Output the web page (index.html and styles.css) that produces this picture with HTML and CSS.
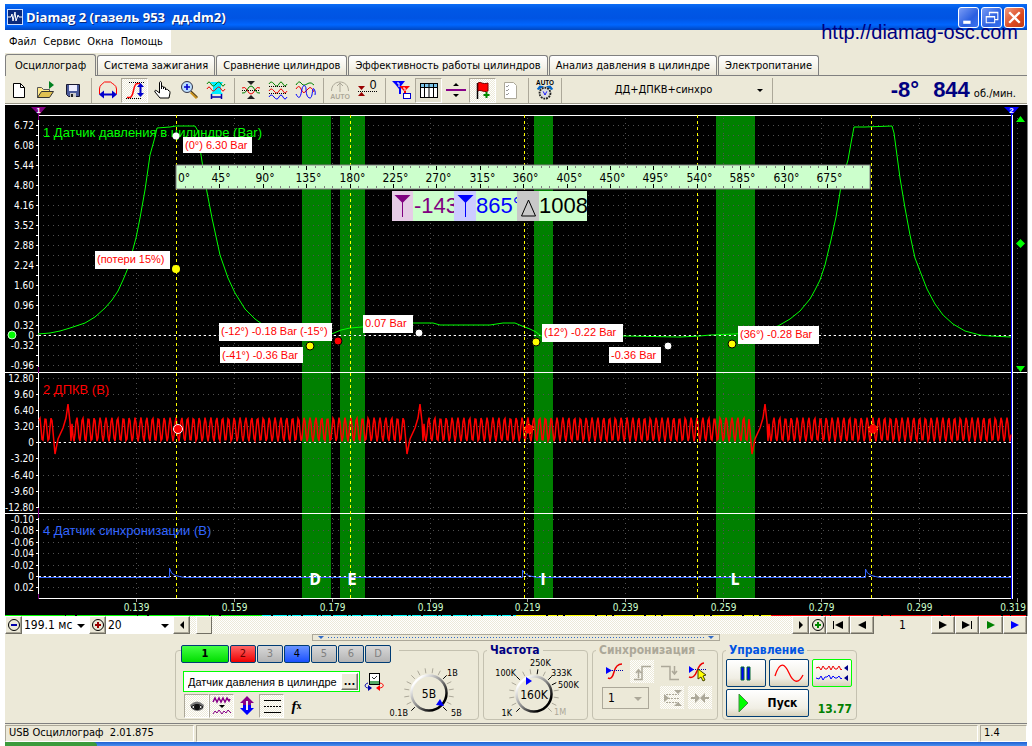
FILE: index.html
```html
<!DOCTYPE html>
<html lang="ru">
<head>
<meta charset="utf-8">
<title>Diamag 2</title>
<link rel="stylesheet" href="styles.css">
</head>
<body>
<div class="window">
  <header class="titlebar">
    <svg class="app-icon" viewBox="0 0 16 16"><rect width="16" height="16" fill="#cfe0ff"/><rect x="1" y="1" width="14" height="14" fill="#0a2a7c"/><path d="M1 8h3l1-3 1 7 2-9 1 9 2-6 1 2h3" fill="none" stroke="#fff"/></svg>
    <h1 class="title">Diamag 2 (газель 953&nbsp; дд.dm2)</h1>
    <button class="win-btn" aria-label="Свернуть"><svg viewBox="0 0 18 18"><rect x="4" y="12" width="7" height="3" fill="#fff"/></svg></button>
    <button class="win-btn" aria-label="Восстановить"><svg viewBox="0 0 18 18"><path d="M7 7V4h8v7h-3M7 4.500h8M4 8h8v6H4zM4 8.500h8" fill="none" stroke="#fff"/></svg></button>
    <button class="win-btn win-close" aria-label="Закрыть"><svg viewBox="0 0 18 18"><path d="M4 4l10 10M14 4L4 14" stroke="#fff" stroke-width="2.200"/></svg></button>
  </header>
  <a class="site" href="#">http://diamag-osc.com</a>
  <nav class="menu"><a href="#">Файл</a><a href="#">Сервис</a><a href="#">Окна</a><a href="#">Помощь</a></nav>
  <div class="tabs" role="tablist">
    <button class="tab active" role="tab" aria-selected="true">Осциллограф</button>
    <button class="tab" role="tab">Система зажигания</button>
    <button class="tab" role="tab">Сравнение цилиндров</button>
    <button class="tab" role="tab">Эффективность работы цилиндров</button>
    <button class="tab" role="tab">Анализ давления в цилиндре</button>
    <button class="tab" role="tab">Электропитание</button>
  </div>
  <div class="toolbar">
    <button class="tool" aria-label="Новый"><svg viewBox="0 0 20 20"><path d="M4.500 3.500h7l4 4v10h-11z" fill="#fff" stroke="#000"/><path d="M11.500 3.500v4h4" fill="none" stroke="#000"/></svg></button>
    <button class="tool" aria-label="Открыть"><svg viewBox="0 0 20 20"><path d="M1.500 17.500v-10h4l2 2h6v3" fill="#ffe98a" stroke="#555"/><path d="M1.500 17.500l4-6h12l-4 6z" fill="#e0c050" stroke="#333"/><path d="M13 1l5 4-5 4z" fill="#008020"/></svg></button>
    <button class="tool" aria-label="Сохранить"><svg viewBox="0 0 20 20"><path d="M3.500 4.500h13v12h-11l-2-2z" fill="#4a5a9a" stroke="#181830"/><rect x="6" y="5" width="8" height="6" fill="#eef"/><rect x="7" y="13" width="6" height="4" fill="#ccc"/><rect x="8" y="14" width="2" height="3" fill="#222"/></svg></button>
    <i class="sep"></i>
    <button class="tool" aria-label="Период"><svg viewBox="0 0 20 20"><path d="M1.500 14V9c0-4 3-5 5-7h6c2 2 6 3 6 7v5" fill="none" stroke="#f00"/><path d="M1 14.500l5-4v3h8v-3l5 4-5 4v-3H6v3z" fill="#00c"/></svg></button>
    <button class="tool pressed" aria-label="Амплитуда"><svg viewBox="0 0 20 20"><path d="M2 17.500h3c4 0 3-14 7-14h3" fill="none" stroke="#f00" stroke-width="1.500"/><path d="M4 2.500h15M1 18.500h15" stroke="#000" stroke-dasharray="1 1"/><path d="M15.500 3l3.500 4h-2.500v6H19l-3.500 4-3.500-4h2.500V7H12z" fill="#00c"/></svg></button>
    <button class="tool" aria-label="Рука"><svg viewBox="0 0 20 20"><path d="M7.500 13V3c0-2 2-2 2 0v6-2c0-1 2-1 2 0v2-1c0-1 2-1 2 0v2c0-1 2.500-1 2.500 0l1 1c1 0 1 1 1 2l-1 5H8l-5-6c-1-2 1-2 2-1z" fill="#fff" stroke="#000"/></svg></button>
    <button class="tool" aria-label="Лупа"><svg viewBox="0 0 20 20"><path d="M12 12l6 6" stroke="#c8901c" stroke-width="3"/><path d="M12 11l6.500 6" stroke="#333"/><circle cx="8" cy="7" r="5.500" fill="#bdf" stroke="#334"/><path d="M8 4v6M5 7h6" stroke="#00c" stroke-width="1.600"/></svg></button>
    <button class="tool" aria-label="Выделение"><svg viewBox="0 0 20 20"><path d="M4 2h13l-2 3v7l2 2H5l2-3V5z" fill="#0ef"/><path d="M1 4q2-4 4 0t5 0 5 0 4 0" fill="none" stroke="#008000"/><path d="M1 9q2-4 4 0t5 0 5 0 4 0" fill="none" stroke="#e00"/><path d="M5.500 14v5M15.500 14v5M6 17h9" stroke="#00a" stroke-width="1.500"/></svg></button>
    <i class="sep"></i>
    <button class="tool" aria-label="Совместить"><svg viewBox="0 0 20 20"><path d="M1 8q3-2 5 2t4 4 4-4 5-2" fill="none" stroke="#e00"/><path d="M1 13q3 1 5-3t4-4 4 4 5 3" fill="none" stroke="#008000"/><path d="M6 1h8l-4 4zM6 19h8l-4-4z" fill="#222"/><path d="M1 10.500h18" stroke="#000" stroke-dasharray="1 1"/></svg></button>
    <button class="tool" aria-label="Разделить"><svg viewBox="0 0 20 20"><path d="M1 4q2-4 5 0t5 0 4 0 4 0" fill="none" stroke="#008000"/><path d="M1 11q2-4 5 0t5 0 4 0 4 0" fill="none" stroke="#e00"/><path d="M1 17q2-4 5 0t5 0 4 0 4 0" fill="none" stroke="#00f"/><path d="M1 6.500h18M1 13.500h18" stroke="#000" stroke-dasharray="1 1"/></svg></button>
    <button class="tool" aria-label="Наложить"><svg viewBox="0 0 20 20"><path d="M1 5q3-5 5-2t4 2 4-2 5 2" fill="none" stroke="#008000"/><path d="M1 9q3-5 5 0t4 3 4-4 5 4" fill="none" stroke="#e00"/><path d="M1 14c4 8 5 0 6-5s4-4 4 0 1 9 4 9 2-12 4-9 1 5 1 6" fill="none" stroke="#00f"/></svg></button>
    <i class="sep"></i>
    <button class="tool" aria-label="Авто" disabled><svg viewBox="0 0 20 20"><path d="M1.500 11c0-12 17-12 17 0M10 3v9M7 6l3-3 3 3" fill="none" stroke="#aca899"/><text x="10" y="19" class="ic-auto muted">AUTO</text></svg></button>
    <button class="tool" aria-label="Обнулить"><svg viewBox="0 0 20 20"><path d="M1 6h7l-3.500 4zM1 16h7l-3.500-4z" fill="#900"/><path d="M1 11.500h19" stroke="#000" stroke-dasharray="1 1"/><text x="16" y="9" class="ic-zero">0</text></svg></button>
    <i class="sep"></i>
    <button class="tool" aria-label="Маркеры"><svg viewBox="0 0 20 20"><path d="M0 1h13l-4 5v8H7V9L3 4z" fill="#00f"/><path d="M7 6h11l-4 4v6h-2v-5z" fill="#f00"/><path d="M5 3h2v4M11 8h2v3" fill="none" stroke="#fff"/><rect x="11.500" y="13.500" width="7" height="5" fill="#fff" stroke="#00c"/></svg></button>
    <button class="tool pressed flat" aria-label="Таблица"><svg viewBox="0 0 20 20"><rect x="1.500" y="3.500" width="17" height="14" fill="#fff" stroke="#000"/><rect x="2" y="4" width="16" height="3" fill="#7ac4e8"/><path d="M1 7.500h18M5.500 4v14M10 4v14M14.500 4v14" stroke="#000"/></svg></button>
    <button class="tool" aria-label="Разделитель"><svg viewBox="0 0 20 20"><rect x="0" y="9" width="20" height="2" fill="#808"/><path d="M7 6h6l-3-3zM7 14h6l-3 3z" fill="#000"/></svg></button>
    <button class="tool pressed" aria-label="Флаг"><svg viewBox="0 0 20 20"><path d="M4.500 3v16" stroke="#000" stroke-width="1.500"/><path d="M5 3c3-2 4 2 10 0v8c-5 2-7-2-10 0z" fill="#f00" stroke="#700"/><path d="M13.500 12v6M10.500 15h6" stroke="#080" stroke-width="2"/></svg></button>
    <button class="tool" aria-label="Отчет"><svg viewBox="0 0 20 20"><path d="M4.500 2.500h9l3 3v13h-12z" fill="#fff" stroke="#aca899"/><path d="M6 6l1 1 2-2M6 10l1 1 2-2M6 14l1 1 2-2" fill="none" stroke="#999"/></svg></button>
    <i class="sep"></i>
    <button class="tool" aria-label="Автоматический режим"><svg viewBox="0 0 20 22"><text x="10" y="6" class="ic-auto">AUTO</text><path d="M1 10l3-4 5 1-6 4zM19 10l-3-4-5 1 6 4z" fill="#06c"/><circle cx="10" cy="14.500" r="6" fill="#ddd" stroke="#222" stroke-dasharray="2 1" stroke-width="2"/><path d="M8 12.500l2 4 2-4" fill="none" stroke="#00f"/></svg></button>
    <i class="sep narrow"></i>
    <label class="combo preset"><select aria-label="Настройка"><option>ДД+ДПКВ+синхро</option></select></label>
    <i class="sep narrow"></i>
    <div class="readings"><strong class="big">-8°</strong><strong class="big">844</strong><span>об./мин.</span></div>
  </div>

  <main class="scope"><svg id="plot" class="plot" viewBox="5 105 1022 511"></svg></main>

  <div class="transport">
    <button class="raised w17" aria-label="Уменьшить"><svg viewBox="0 0 14 14"><circle cx="7" cy="7" r="5.500" fill="none" stroke="#000"/><path d="M4 7h6" stroke="#00a" stroke-width="2"/></svg></button>
    <label class="combo w68"><select aria-label="Развертка"><option>199.1 мс</option></select></label>
    <button class="raised w17" aria-label="Увеличить"><svg viewBox="0 0 14 14"><circle cx="7" cy="7" r="5.500" fill="none" stroke="#000"/><path d="M4 7h6M7 4v6" stroke="#900" stroke-width="2"/></svg></button>
    <label class="combo w68"><select aria-label="Кадры"><option>20</option></select></label>
    <button class="raised w17" aria-label="Влево"><svg viewBox="0 0 14 14"><path d="M9 3v8L5 7z"/></svg></button>
    <div class="track"><div class="thumb"></div></div>
    <button class="raised w17" aria-label="Вправо"><svg viewBox="0 0 14 14"><path d="M5 3v8l4-4z"/></svg></button>
    <button class="raised w17" aria-label="Добавить"><svg viewBox="0 0 14 14"><circle cx="7" cy="7" r="5.500" fill="none" stroke="#000"/><path d="M4 7h6M7 4v6" stroke="#080" stroke-width="2"/></svg></button>
    <button class="raised w24" aria-label="Первый"><svg viewBox="0 0 14 14"><path d="M2 3h1v8H2zM12 3v8L4 7z"/></svg></button>
    <button class="raised w24" aria-label="Предыдущий"><svg viewBox="0 0 14 14"><path d="M11 3v8L3 7z"/></svg></button>
    <output class="frame">1</output>
    <button class="raised w24" aria-label="Следующий"><svg viewBox="0 0 14 14"><path d="M3 3v8l8-4z"/></svg></button>
    <button class="raised w24" aria-label="Последний"><svg viewBox="0 0 14 14"><path d="M11 3h1v8h-1zM2 3v8l8-4z"/></svg></button>
    <button class="raised w24" aria-label="Воспроизвести"><svg viewBox="0 0 14 14"><path d="M3 3v8l8-4z" fill="#008000"/></svg></button>
    <button class="raised w24" aria-label="Воспроизвести все"><svg viewBox="0 0 14 14"><path d="M3 3v8l8-4z" fill="#00f"/></svg></button>
  </div>
  <div class="splitter"><i class="down"></i><i class="dots"></i><i class="down"></i></div>

  <div class="panels">
    <section class="group channels">
      <div class="channel-left">
        <div class="channel-row">
          <button class="ch ch1">1</button><button class="ch ch2">2</button><button class="ch">3</button><button class="ch ch4">4</button><button class="ch">5</button><button class="ch">6</button><button class="ch">D</button>
        </div>
        <div class="name-row">
          <div class="name-box"><input aria-label="Название канала" value="Датчик давления в цилиндре"><button class="raised dots-btn" aria-label="Выбрать">...</button></div>
          <button class="tool" aria-label="Калибровка"><svg viewBox="0 0 20 20"><rect x="5.500" y="1.500" width="10" height="11" fill="#fff" stroke="#000"/><rect x="6" y="9" width="9" height="3" fill="#5a6"/><path d="M8 5l2 2 3-3" fill="none" stroke="#333"/><path d="M4 11c-4 1-4 5 1 5" fill="none" stroke="#00a"/><path d="M16 11c5 1 4 5-1 5" fill="none" stroke="#f00"/><path d="M4 13l4 3-4 3z" fill="#00a"/><path d="M16 13l-4 3 4 3z" fill="#f00"/></svg></button>
        </div>
        <div class="icon-row">
          <button class="tool pressed" aria-label="Видимость"><svg viewBox="0 0 20 20"><path d="M3 9q7-7 14 0l-1 4q-6 4-11 0z" fill="#777"/><path d="M4 11q6-5 12 0-6 5-12 0z" fill="#ddd" stroke="#111"/><circle cx="10" cy="11" r="3" fill="#111"/></svg></button>
          <button class="tool pressed" aria-label="Фильтр"><svg viewBox="0 0 20 20"><path d="M1 6l2-4 2 4 2-4 2 4 2-4 2 4 2-4 2 3 1-2" fill="none" stroke="#808" stroke-width="1.500"/><path d="M7 9h6l-3 3z"/><path d="M1 18l2-3 2 2 2-3 3 4 2-3 2 2 2-3 3 3" fill="none" stroke="#808"/></svg></button>
          <button class="tool" aria-label="Инвертировать"><svg viewBox="0 0 20 20"><path d="M10 0l7 7h-3v3H6V7H3z" fill="#808"/><path d="M10 19l7-7h-3v-3H6v3H3z" fill="#00f"/><rect x="9" y="5" width="2" height="9" fill="#eee"/></svg></button>
          <button class="tool pressed" aria-label="Линии"><svg viewBox="0 0 20 20"><path d="M2 4.500h17M2 16.500h17" stroke="#000"/><path d="M2 10.500h17" stroke="#000" stroke-dasharray="2 1"/></svg></button>
          <button class="tool fx" aria-label="Функция"><i>f</i><b>x</b></button>
        </div>
      </div>
      <svg class="knob knob-v" viewBox="386 655 90 64" id="knobV"></svg>
    </section>
    <fieldset class="group freq"><legend>Частота</legend><svg class="knob knob-f" viewBox="486 657 100 62" id="knobF"></svg></fieldset>
    <fieldset class="group sync"><legend>Синхронизация</legend>
      <div class="sync-row">
        <button class="tool" aria-label="Порог"><svg viewBox="0 0 20 20"><path d="M4 16q4 2 6-6t8-8" fill="none" stroke="#e00" stroke-width="1.500"/><path d="M6 8.500h13" stroke="#00a" stroke-dasharray="1 1"/><path d="M2 5v7l6-3.500z" fill="#00f"/></svg></button>
        <button class="tool pale" aria-label="Фронт" disabled><svg viewBox="0 0 20 20"><path d="M2 17.500h8v-13h9M6.500 16V8M4 11l2.500-3L9 11" fill="none" stroke="#aca899" stroke-width="1.500"/></svg></button>
        <button class="tool" aria-label="Спад" disabled><svg viewBox="0 0 20 20"><path d="M1 4.500h9v13h9M14.500 4v8M12 9l2.500 3L17 9" fill="none" stroke="#aca899" stroke-width="1.500"/></svg></button>
        <button class="tool" aria-label="Указать"><svg viewBox="0 0 20 20"><path d="M1 15q5 2 8-6t7-8" fill="none" stroke="#e00" stroke-width="1.500"/><path d="M3 7.500h16" stroke="#00a" stroke-dasharray="1 1"/><path d="M1 4v7l5-3.500z" fill="#00f"/><path d="M10 7v10l3-2 2 4 2-1-2-4 3-1z" fill="#ff0" stroke="#440"/></svg></button>
      </div>
      <div class="sync-row">
        <label class="combo sync-combo"><select aria-label="Канал синхронизации" disabled><option>1</option></select></label>
        <button class="tool pale" aria-label="Уровень" disabled><svg viewBox="0 0 20 20"><path d="M2 6v8l5-4zM12 2h8l-4 4zM12 18h8l-4-4z" fill="#aca899"/><path d="M4 6.500h13M6 10.500h11M4 14.500h13" stroke="#aca899" stroke-dasharray="2 1"/></svg></button>
        <button class="tool pale" aria-label="Сжать" disabled><svg viewBox="0 0 20 20"><path d="M1 9h4V5l5 5-5 5v-4H1zM19 9h-4V5l-5 5 5 5v-4h4z" fill="#aca899"/></svg></button>
      </div>
    </fieldset>
    <fieldset class="group control"><legend>Управление</legend>
      <div class="control-grid">
        <button class="xp" aria-label="Пауза"><svg viewBox="0 0 34 22"><path d="M12 5h3v13h-3zM18 5h3v13h-3z" fill="#00f" stroke="#063"/></svg></button>
        <button class="xp" aria-label="Один кадр"><svg viewBox="0 0 34 22"><path d="M3 14C8-2 13 2 17 11s9 12 14 2" fill="none" stroke="#f00" stroke-width="1.300"/></svg></button>
        <button class="xp selected" aria-label="Поток"><svg viewBox="0 0 34 22"><path d="M1 6l3-1 2 3 2-4 2 3h2l2-3 2 4 2-4 2 3h2l2-3 2 4 1-1" fill="none" stroke="#e00"/><path d="M1 16l3 1 2-3 2 4 2-3h2l2-2 2 4 2-3 2 2h2l2-2 2 3 1-1" fill="none" stroke="#00f"/><path d="M33 3v6l-4-3zM33 13v6l-4-3z" fill="#008"/></svg></button>
        <button class="xp start"><svg viewBox="0 0 12 20"><path d="M1 1v18l9-9z" fill="#0f0" stroke="#484"/></svg>Пуск</button>
        <output class="volt">13.77</output>
      </div>
    </fieldset>
  </div>

  <footer class="status"><span class="cell device">USB Осциллограф&nbsp; 2.01.875</span><span class="cell fill"></span><span class="cell version">1.4</span></footer>
  <div class="taskbar"><i class="start-edge"></i></div>
</div>
<script src="plot.js"></script>
</body>
</html>
```
FILE: styles.css
```css
* { box-sizing: border-box; }
body { margin: 0; background: #fff; color: #000; font: 11px/14px "DejaVu Sans Condensed", "Noto Sans", sans-serif; }
button, input, select { font: inherit; color: inherit; margin: 0; padding: 0; border-radius: 0; }
svg { display: block; }

.window { position: relative; margin: 4px 5px 0 5px; background: #ece9d8; display: flex; flex-direction: column; }

.titlebar { height: 26px; display: flex; align-items: center; gap: 2px; padding: 0 2px; background: linear-gradient(#0a6cf5, #0058e6 20%, #0054e3 55%, #0066ff 80%, #0047c0); }
.app-icon { width: 16px; height: 16px; margin: 0 1px 0 0; }
.title { flex: 1; margin: 0; color: #fff; font: bold 13px/16px "Open Sans", sans-serif; text-shadow: 1px 1px #0a2a7c; }
.win-btn { width: 21px; height: 21px; border: 1px solid #fff; border-radius: 3px; background: linear-gradient(135deg, #7a9cf5, #2a5fe0 60%, #3a74f0); }
.win-close { background: linear-gradient(135deg, #f09a80, #dd4a20 60%, #c03c14); }
.site { position: absolute; right: 9px; top: 16px; color: #000080; text-decoration: none; font: 20px/24px "Liberation Sans", sans-serif; }

.menu { align-self: flex-start; height: 23px; margin-bottom: 1px; display: flex; align-items: center; gap: 7px; padding: 0 8px 0 4px; background: #fff; }
.menu a { color: #000; text-decoration: none; }

.tabs { display: flex; align-items: flex-end; gap: 1px; height: 22px; border-bottom: 1px solid #808080; }
.tab { height: 20px; padding: 0 6px; border: 1px solid #808080; border-bottom: 0; border-radius: 3px 3px 0 0; background: linear-gradient(#fff, #f4f2e8 60%, #e8e4d4); }
.tab.active { height: 22px; padding: 0 9px; margin-bottom: -1px; background: #ece9d8; }

.toolbar { height: 29px; display: flex; align-items: center; border-bottom: 1px solid #fff; box-shadow: inset 0 -1px #9a9788; }
.tool { width: 27px; height: 25px; flex: none; display: flex; align-items: center; justify-content: center; border: 1px solid transparent; background: none; }
.tool svg { width: 20px; height: 20px; overflow: visible; }
.pressed, .pale { background: repeating-conic-gradient(#fff 0 25%, #ece9d8 0 50%) 0 0 / 2px 2px; }
.pressed { border-color: #aca899 #fff #fff #aca899; }
.flat { background: #e4e1d0; }
.sep { flex: none; width: 8px; height: 25px; background: linear-gradient(#aca899, #aca899) 5px 0 / 1px 100% no-repeat; }
.narrow { width: 6px; background-position: 3px 0; }
.ic-auto { font: bold 7px "Liberation Sans", sans-serif; text-anchor: middle; }
.muted { fill: #aca899; }
.ic-zero { font: 12px "Liberation Sans", sans-serif; text-anchor: middle; }
.combo { position: relative; display: block; }
.combo select { appearance: none; width: 100%; height: 100%; border: 0; background: transparent; padding-left: 2px; outline: 0; }
.combo::after { content: ""; position: absolute; right: 6px; top: 50%; margin-top: -1px; border: 4px solid transparent; border-top-color: #000; border-bottom: 0; pointer-events: none; }
.preset { width: 205px; height: 22px; }
.preset select { text-align-last: center; padding-right: 8px; }
.preset::after { border-width: 3px; border-bottom: 0; }
.readings { flex: 1; display: flex; justify-content: flex-end; align-items: baseline; gap: 4px; padding-right: 11px; white-space: nowrap; }
.big { color: #000080; font: bold 22px/26px "Liberation Sans", sans-serif; }
.big + .big { margin-left: 10px; }

.scope { background: #000; border-right: 1px solid #808080; margin-right: -1px; }
.plot { width: 100%; height: auto; }
.plot text { fill: #fff; font: 10px "DejaVu Sans Condensed", "Noto Sans", sans-serif; }
.plot .axis { text-anchor: end; }
.plot .time { text-anchor: middle; fill: #cfc; }
.plot .name { font: 13px "Liberation Sans", sans-serif; }
.plot .note { font: 11px "Liberation Sans", sans-serif; }
.plot .scale { fill: #000; font-size: 12px; }
.plot .value { font: 22px "Liberation Sans", sans-serif; }
.plot .stroke-mark { font: bold 15px "DejaVu Sans Condensed", sans-serif; text-anchor: middle; }
.plot .cursor { font: bold 8px "Liberation Sans", sans-serif; text-anchor: middle; }
.plot .green { fill: #0f0; }
.plot .red, .plot .note { fill: #f00; }
.plot .blue { fill: #36f; }
.plot .pure-blue { fill: #00f; }
.plot .purple { fill: #800080; }
.plot .black { fill: #000; }

.transport { display: flex; height: 18px; }
.raised { flex: none; display: flex; align-items: center; justify-content: center; border: 1px solid; border-color: #fff #716f64 #716f64 #fff; background: #ece9d8; box-shadow: inset -1px -1px #aca899; }
.raised svg { width: 14px; height: 14px; }
.w17 { width: 17px; }
.w24 { width: 24px; }
.w68 { width: 67px; background: #fff; font-size: 12px; }
.w68::after { right: 4px; }
.track { flex: 1; padding-left: 6px; background: repeating-conic-gradient(#fff 0 25%, #ece9d8 0 50%) 0 0 / 2px 2px; }
.thumb { width: 16px; height: 18px; border: 1px solid; border-color: #fff #716f64 #716f64 #fff; background: #ece9d8; }
.frame { width: 57px; text-align: center; line-height: 18px; font-size: 12px; }
.splitter { width: 408px; height: 7px; margin-left: 307px; display: flex; align-items: center; gap: 4px; padding: 0 5px; border: 1px solid #aca899; }
.dots { flex: 1; height: 1px; background: repeating-linear-gradient(90deg, #316ac5 0 1px, transparent 1px 3px); }
.down { border: 3px solid transparent; border-top-color: #316ac5; border-bottom: 0; }

.panels { display: flex; gap: 4px; height: 83px; padding: 3px 0 3px 170px; border-bottom: 1px solid #808080; }
.group { margin: 0; padding: 0; border: 1px solid #c4c1b0; border-radius: 4px; min-width: 0; }
.group legend { padding: 0 3px; margin-left: 3px; font: bold 12px/13px "DejaVu Sans Condensed", sans-serif; }
.channels { width: 304px; margin-top: 6px; display: flex; }
.channel-left { margin-left: 5px; width: 204px; }
.channel-row { display: flex; gap: 1px; width: 218px; margin-top: -6px; background: #ece9d8; }
.ch { width: 26px; height: 18px; border: 1px solid #003c74; border-radius: 2px; color: #808080; background: linear-gradient(#d8d8d8, #b4b4b4); }
.ch1 { width: 48px; color: #000; font-weight: bold; background: linear-gradient(#4f4, #0d0); }
.ch2 { color: #600; background: linear-gradient(#f66, #e00); }
.ch4 { color: #000; background: linear-gradient(#6a94ff, #1a50ff); }
.name-row { display: flex; align-items: center; margin-top: 6px; padding-left: 2px; }
.name-box { flex: none; width: 177px; height: 21px; display: flex; align-items: center; border: 1px solid #0f0; background: #fff; padding: 1px; }
.name-box input { flex: 1; min-width: 0; border: 0; outline: 0; background: transparent; padding-left: 3px; font-family: "Liberation Sans", sans-serif; }
.dots-btn { width: 17px; height: 17px; line-height: 8px; font-weight: bold; }
.icon-row { display: flex; gap: 0; margin-top: 0; padding-left: 3px; }
.icon-row .tool { width: 25px; height: 24px; }
.fx { font: bold 15px/18px "Liberation Serif", serif; }
.fx b { font-size: 10px; }
.knob { flex: none; overflow: visible; }
.knob-v { width: 90px; height: 64px; margin: 4px 0 0 1px; }
.knob-f { width: 100px; height: 62px; margin-left: 2px; }
.knob text { font: 9px "DejaVu Sans Condensed", sans-serif; }
.knob .main { font-size: 12px; text-anchor: middle; }
.knob .end { text-anchor: end; }
.knob .off { fill: #aca899; }
.freq { width: 105px; color: #000080; }
.sync { width: 126px; color: #aca899; }
.control { width: 135px; color: #0054e3; }
.sync-row { display: flex; align-items: center; gap: 4px; padding: 3px 0 0 9px; }
.sync-row .tool { width: 24px; height: 23px; }
.sync-combo { width: 47px; height: 22px; border: 1px solid #aca899; margin-right: 7px; font-size: 12px; }
.sync-combo select { color: #000; opacity: 1; padding-left: 5px; }
.sync-combo::after { border-top-color: #aca899; }
.control-grid { display: grid; grid-template-columns: 40px 40px 40px; grid-template-rows: 28px 28px; gap: 2px 3px; padding: 2px 0 0 3px; }
.xp { display: flex; align-items: center; justify-content: center; border: 1px solid #003c74; border-radius: 2px; background: linear-gradient(#fff, #f0eee4 70%, #d8d2bc); }
.xp svg { width: 34px; height: 22px; }
.xp.selected { border-color: #0f0; }
.xp.start { grid-column: span 2; gap: 18px; color: #000; font: bold 12px/16px "DejaVu Sans Condensed", sans-serif; }
.xp.start svg { width: 12px; height: 20px; }
.volt { align-self: end; text-align: right; color: #008000; font: bold 12px/16px "DejaVu Sans Condensed", sans-serif; }

.status { display: flex; gap: 2px; height: 18px; padding-top: 1px; }
.cell { border: 1px solid; border-color: #aca899 #fff #fff #aca899; padding-left: 3px; }
.device { width: 189px; }
.fill { flex: 1; }
.version { width: 47px; }
.taskbar { height: 4px; background: linear-gradient(#1f5fd0, #4a90f0); }
.start-edge { display: block; width: 92px; height: 4px; border-radius: 0 4px 0 0; background: #3c9a3c; }
```
FILE: plot.js
```js
const NS = "http://www.w3.org/2000/svg";

function add(parent, tag, attrs, text) {
  const node = document.createElementNS(NS, tag);
  for (const key in attrs) node.setAttribute(key, attrs[key]);
  if (text !== undefined) node.textContent = text;
  parent.appendChild(node);
  return node;
}

const plot = document.getElementById("plot");
const line = (x1, y1, x2, y2, stroke, extra) =>
  add(plot, "path", Object.assign({ d: `M${x1} ${y1}L${x2} ${y2}`, stroke, fill: "none", "shape-rendering": "crispEdges" }, extra));
const rect = (x, y, width, height, fill) => add(plot, "rect", { x, y, width, height, fill });
const label = (x, y, cls, text) => add(plot, "text", { x, y, class: cls }, text);
const dot = (cx, cy, r, fill, stroke) => add(plot, "circle", { cx, cy, r, fill, stroke: stroke || "none" });

rect(5, 105, 1022, 511, "#000");

// valve phases
[[302, 29], [340, 25], [534, 19], [716, 39]].forEach(([x, w]) => rect(x, 116, w, 482, "#008000"));

// channel scales
const scales = [];
for (let i = 0; i <= 24; i++) {
  const shown = i % 2 === 0 && i !== 22 || i === 21;
  scales.push([125 + i * 10, i === 21 ? "0" : shown ? (6.72 - i * 0.32).toFixed(2) : i === 22 ? "-0.32" : ""]);
}
[[378, "12.80"], [394, "9.60"], [410, "6.40"], [426, "3.20"], [442, "0"], [458, "-3.20"], [475, "-6.40"], [491, "-9.60"], [507, "-12.80"],
 [519, "-0.10"], [530, "-0.08"], [542, "-0.06"], [553, "-0.04"], [565, "-0.02"], [576, "0"], [587, "0.02"]].forEach(s => scales.push(s));
scales.forEach(([y, text]) => {
  line(43, y + 0.5, 1011, y + 0.5, "#505050", { "stroke-dasharray": "1 4" });
  line(36, y + 0.5, 39, y + 0.5, "#fff");
  label(34, y + 4, "axis", text);
});

// time scale
for (let i = 0; i < 10; i++) {
  const x = Math.round(136 + i * 97.85) + 0.5;
  line(x, 118, x, 598, "#505050", { "stroke-dasharray": "1 4" });
  line(x, 598, x, 602, "#999");
  label(Math.min(x, 1013), 611, "time", (0.139 + i * 0.02).toFixed(3));
}

label(43, 137, "name green", "1 Датчик давления в цилиндре (Bar)");
label(43, 394, "name red", "2 ДПКВ (В)");
label(43, 535, "name blue", "4 Датчик синхронизации (В)");

// frame
line(38, 115.5, 1012, 115.5, "#fff");
line(5, 372.5, 1027, 372.5, "#fff");
line(5, 513.5, 1027, 513.5, "#fff");
line(38, 598.5, 1012, 598.5, "#fff");
line(38.5, 115, 38.5, 599, "#fff");
line(1012.5, 115, 1012.5, 599, "#fff");
line(1011.5, 112, 1011.5, 599, "#00f");
[[112, 120], [367, 373], [508, 518], [594, 599]].forEach(([a, b]) => line(38.5, a, 38.5, b, "#800080"));
[335.5, 442.5, 576.5].forEach(y => line(39, y, 1011, y, "#fff", { "stroke-dasharray": "2 3" }));

// cylinder pressure
const pressure = [[38,334],[50,333],[60,331],[70,328],[85,323],[95,317],[105,308],[112,300],[118,291],[123,280],[128,268],[133,249],[136,238],[140,218],[145,190],[150,155],[155,137],[157,128],[170,127],[176,126],[195,126],[198,131],[201,155],[206,187],[212,218],[220,255],[228,278],[235,293],[245,309],[255,319],[262,324],[290,331],[325,336],[334,333],[341,330],[350,328],[362,327],[400,323],[433,323],[440,325],[490,325],[503,323],[515,323],[522,326],[530,329],[536,332],[541,336],[623,336],[680,337],[700,336],[710,335],[735,334],[760,331],[778,326],[790,319],[800,311],[810,299],[815,290],[820,280],[825,265],[831,240],[836,217],[842,180],[848,160],[851,143],[854,127],[865,127],[892,126],[894,133],[900,178],[905,208],[910,235],[915,258],[920,271],[927,289],[935,304],[943,315],[953,324],[965,331],[980,335],[990,336],[1011,337]];
add(plot, "path", { d: "M" + pressure.map(p => p.join(" ")).join("L"), fill: "none", stroke: "#0f0" });

// crankshaft sensor: 58 teeth and a gap of two per turn
const gaps = [55, 407, 752];
const wave = [];
for (let x = 39; x <= 1011; x += 1) {
  const gap = gaps.find(g => x > g - 3 && x < g + 17);
  if (gap !== undefined) {
    if (x === gap - 2) wave.push([gap, 454], [gap + 3, 439], [gap + 8, 428], [gap + 11, 418], [gap + 13, 404], [gap + 15, 422], [gap + 16, 441]);
    continue;
  }
  const from = [71 - 352, 71, 423, 768].filter(s => s <= x).pop();
  wave.push([x, (429.5 + 12 * Math.cos((x - from) / 5.83 * 2 * Math.PI + Math.PI)).toFixed(1)]);
}
add(plot, "path", { d: "M" + wave.map(p => p.join(" ")).join("L"), fill: "none", stroke: "#f00", "stroke-width": 1.5 });

// synchronisation
const pulses = [[169.5, 568], [522.5, 570], [865.5, 569]].map(([x, y]) => `H${x}V${y}L${x + 2} 573L${x + 6} 575.500L${x + 14} 577.500`);
add(plot, "path", { d: "M39 577.500" + pulses.join("") + "H1011", fill: "none", stroke: "#36f" });

[176.5, 350.5, 524.5, 697.5, 871.5].forEach(x => line(x, 115, x, 598, "#ff0", { "stroke-dasharray": "3 3" }));
[["D", 315], ["E", 352], ["I", 543], ["L", 735]].forEach(([t, x]) => label(x, 585, "stroke-mark", t));

// degree ruler
add(plot, "rect", { x: 176, y: 165, width: 694, height: 24, fill: "#cfc", stroke: "#808080" });
for (let i = 0; i < 80; i++) {
  const x = Math.round(176 + i * 8.68) + 0.5;
  const major = i % 5 === 0;
  if (i) {
    line(x, 166, x, major ? 170 : 168, major ? "#000" : "#808080");
    line(x, 188, x, major ? 184 : 186, major ? "#000" : "#808080");
  }
  if (major) label(i === 0 ? 178 : x - (i < 15 ? 8 : 11), 182, "scale", i * 9 + "°");
}

// cursor read-outs
[[392, 21, "#e6cce6"], [413, 41, "#cfc"], [454, 22, "#ccf"], [476, 41, "#cfc"], [517, 22, "#c8c8c8"], [539, 48, "#cfc"]].forEach(([x, w, c]) => rect(x, 191, w, 30, c));
[[414, 40, "-143", "purple"], [476, 41, "865°", "pure-blue"], [539, 48, "1008", "black"]].forEach(([x, w, t, c]) => {
  const box = add(plot, "svg", { x, y: 191, width: w, height: 30 });
  add(box, "text", { x: 0, y: 22, class: "value " + c }, t);
});
[[402.5, "#800080"], [465.5, "#00f"]].forEach(([x, c]) => {
  add(plot, "path", { d: `M${x - 8} 195h16l-8 8z`, fill: c });
  line(x, 200, x, 217, c);
});
add(plot, "path", { d: "M528.500 200l-7 16h14z", fill: "none", stroke: "#000" });

// measurements
[[183, 137, 69, 16, "(0°) 6.30 Bar"], [95, 251, 75, 18, "(потери 15%)"], [219, 323, 113, 18, "(-12°) -0.18 Bar (-15°)"], [220, 347, 83, 16, "(-41°) -0.36 Bar"],
 [363, 315, 50, 18, "0.07 Bar"], [542, 324, 81, 18, "(12°) -0.22 Bar"], [609, 347, 52, 16, "-0.36 Bar"], [738, 326, 81, 18, "(36°) -0.28 Bar"]].forEach(([x, y, w, h, t]) => {
  rect(x, y, w, h, "#fff");
  label(x + 2, y + 12, "note", t);
});
dot(176, 136, 3.5, "#fff");
dot(176, 269, 4, "#ff0");
dot(310, 346, 4, "#ff0", "#000");
dot(338, 341, 4, "#f00", "#000");
dot(419, 333, 4, "#fff", "#000");
dot(536, 342, 4, "#ff0", "#000");
dot(668, 346, 4, "#fff", "#000");
dot(732, 344, 4, "#ff0", "#000");
dot(12, 335, 4, "#0f0", "#cfc");
dot(178, 429, 4.5, "#f00", "#fff");
dot(529, 429, 4.5, "#f00");
dot(873, 429, 4.5, "#f00");
[529, 873].forEach(cx => add(plot, "circle", { cx, cy: 429, r: 4.5, fill: "none", stroke: "#ff0", "stroke-dasharray": "1 4" }));

// cursor heads and level handles
add(plot, "path", { d: "M31 107h15l-7 8z", fill: "#800080" });
label(38.5, 113, "cursor", "1");
add(plot, "path", { d: "M1004 107h15l-7 8z", fill: "#00f" });
label(1011.5, 113, "cursor", "2");
add(plot, "path", { d: "M1016 122l4.500-6 4.500 6zM1020.500 239l4.500 4.500-4.500 4.500-4.500-4.500zM1016 366h9l-4.500 6z", fill: "#0f0" });

// overview strip
[[5, 262, "#0f0", "60 1 9 2"], [262, 516, "#0ff", "9 2 14 1 3 1"], [516, 771, "#ff0", "30 2 9 1 5 2"], [771, 1026, "#f00", "50 2 7 1"]].forEach(([a, b, c, d]) =>
  line(a, 615.5, b, 615.5, c, { "stroke-dasharray": d }));

function knob(id, cx, cy, value, pointer, marks, texts) {
  const svg = document.getElementById(id);
  const defs = add(svg, "linearGradient", { id: id + "Ring", x1: 0, y1: 0, x2: 1, y2: 1 });
  add(defs, "stop", { offset: 0.15, "stop-color": "#fff" });
  add(defs, "stop", { offset: 0.5, "stop-color": "#888" });
  add(defs, "stop", { offset: 0.8, "stop-color": "#000" });
  for (let a = -225; a <= 45; a += 18) {
    const c = Math.cos(a * Math.PI / 180), s = Math.sin(a * Math.PI / 180);
    const on = marks.includes(a);
    add(svg, "path", { d: `M${cx + c * 20} ${cy + s * 20}L${cx + c * 25} ${cy + s * 25}`, stroke: on ? "#000" : "#aca899" });
  }
  add(svg, "circle", { cx, cy, r: 17.5, fill: "#ece9d8", stroke: `url(#${id}Ring)`, "stroke-width": 2.5 });
  add(svg, "path", { d: pointer, fill: "#00f" });
  add(svg, "text", { x: cx, y: cy + 5, class: "main" }, value);
  texts.forEach(([x, y, t, cls]) => add(svg, "text", { x, y, class: cls || "" }, t));
}
knob("knobV", 429, 693, "5В", "M440 699l4 7-8-1z", [-225, -45, 45], [[447, 676, "1В"], [408, 716, "0.1В", "end"], [451, 716, "5В"]]);
knob("knobF", 534, 694, "160K", "M526 677l6 4-6 4z", [-225, -135, -81, -45, -27], [[530, 666, "250K"], [516, 676, "100K", "end"], [551, 676, "333K"], [558, 688, "500K"], [512, 716, "1K", "end"], [554, 715, "1M", "off"]]);
```
